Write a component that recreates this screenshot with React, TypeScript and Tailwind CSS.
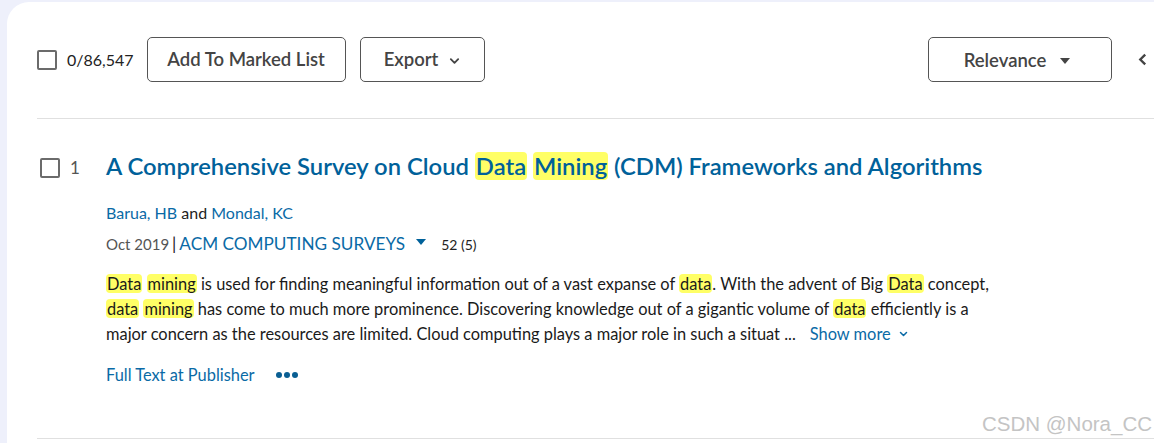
import React from "react";

const H = ({ children }: { children: React.ReactNode }) => (
  <span className="bg-[#ffff66] rounded-[4px] px-[1px]">{children}</span>
);

const Box = ({ className = "" }: { className?: string }) => (
  <span className={"block w-[20px] h-[20px] border-2 border-[#6b6b6b] rounded-[2px] bg-white " + className} />
);

const ChevronDown = ({ className = "" }: { className?: string }) => (
  <svg viewBox="0 0 12 8" className={className} fill="none" stroke="currentColor" strokeWidth="2" strokeLinecap="round" strokeLinejoin="round">
    <path d="M2 2l4 4 4-4" />
  </svg>
);

export default function App() {
  return (
    <div className="relative h-[443px] w-[1154px] overflow-hidden bg-[#eef0fb] pl-[7px] pt-[2px]" style={{ fontFamily: "Lato, 'Noto Sans', sans-serif" }}>
      <div className="h-[441px] bg-white rounded-tl-[22px] pl-[30px]">
        {/* toolbar */}
        <div className="flex items-center h-[45px] translate-y-[35px]">
          <Box />
          <span className="ml-[10px] text-[16px] text-[#222]">0/86,547</span>
          <button className="ml-[13px] h-[45px] w-[199px] rounded-[5px] border border-[#555] text-[18.5px] font-semibold text-[#444]">Add To Marked List</button>
          <button className="ml-[14px] h-[45px] w-[125px] rounded-[5px] border border-[#555] text-[18.5px] font-semibold text-[#444] flex items-center justify-center gap-[11px]">
            Export <ChevronDown className="w-[11px] h-[8px] mt-[2px]" />
          </button>
          <button className="ml-auto h-[45px] w-[184px] rounded-[5px] border border-[#555] text-[18.5px] font-semibold text-[#444] flex items-center justify-center gap-[14px] pr-[6px] pt-[3px]">
            Relevance
            <svg viewBox="0 0 10 6" className="w-[10px] h-[6px]"><path d="M0 0h10L5 6z" fill="#444" /></svg>
          </button>
          <svg viewBox="0 0 10 14" className="ml-[26px] w-[9px] h-[13px] mr-[7px]" fill="none" stroke="#444" strokeWidth="2.6" strokeLinejoin="miter"><path d="M8 1.5L2.5 7 8 12.5" /></svg>
        </div>
        <div className="mt-[71px] border-t border-[#e0e0e0]" />
        {/* record */}
        <div className="flex pt-[32px]">
          <div className="w-[69px] flex items-start pt-[7px]">
            <Box className="ml-[3px]" />
            <span className="ml-[10px] text-[17px] leading-[20px] text-[#555]">1</span>
          </div>
          <div className="flex-1">
            <div className="text-[23.8px] leading-[30px] font-semibold text-[#00619a] whitespace-nowrap">
              A Comprehensive Survey on Cloud <H>Data</H> <H>Mining</H> (CDM) Frameworks and Algorithms
            </div>
            <div className="mt-[22px] text-[16px] leading-[20px] text-[#222]">
              <span className="text-[#0a6aa6]">Barua, HB</span> and <span className="text-[#0a6aa6]">Mondal, KC</span>
            </div>
            <div className="mt-[10px] flex items-center h-[22px] text-[15px]">
              <span className="text-[#555]">Oct 2019</span>
              <span className="ml-[3px] text-[#222] text-[17px]">|</span>
              <span className="ml-[3px] text-[17.2px] text-[#0a6aa6]">ACM COMPUTING SURVEYS</span>
              <svg viewBox="0 0 10 6" className="ml-[11px] w-[10px] h-[6px] -mt-[4px]"><path d="M0 0h10L5 6z" fill="#00619a" /></svg>
              <span className="ml-[15px] text-[14px] text-[#222]">52 (5)</span>
            </div>
            <div className="mt-[16px] text-[16.4px] leading-[25px] text-[#1a1a1a]">
              <div className="whitespace-nowrap"><H>Data</H> <H>mining</H> is used for finding meaningful information out of a vast expanse of <H>data</H>. With the advent of Big <H>Data</H> concept,</div>
              <div className="whitespace-nowrap"><H>data</H> <H>mining</H> has come to much more prominence. Discovering knowledge out of a gigantic volume of <H>data</H> efficiently is a</div>
              <div className="whitespace-nowrap flex items-center">
                <span>major concern as the resources are limited. Cloud computing plays a major role in such a situat ...</span>
                <span className="ml-[14px] text-[#0a6aa6]">Show more</span>
                <ChevronDown className="ml-[8px] w-[9px] h-[6px] text-[#0a6aa6]" />
              </div>
            </div>
            <div className="mt-[18px] flex items-center h-[22px]">
              <span className="text-[16.4px] text-[#0a6aa6]">Full Text at Publisher</span>
              <span className="ml-[21px] flex gap-[2px]">
                <span className="w-[6px] h-[6px] rounded-full bg-[#0a5f93]" />
                <span className="w-[6px] h-[6px] rounded-full bg-[#0a5f93]" />
                <span className="w-[6px] h-[6px] rounded-full bg-[#0a5f93]" />
              </span>
            </div>
          </div>
        </div>
      </div>
      <div className="absolute left-[37px] right-0 top-[438px] border-t border-[#e0e0e0]" />
      <div className="absolute left-[982px] top-[409px] text-[20.5px] text-[#c4c4c4]" style={{ fontFamily: "'Liberation Sans', Arial, sans-serif" }}>CSDN @Nora_CC</div>
    </div>
  );
}
